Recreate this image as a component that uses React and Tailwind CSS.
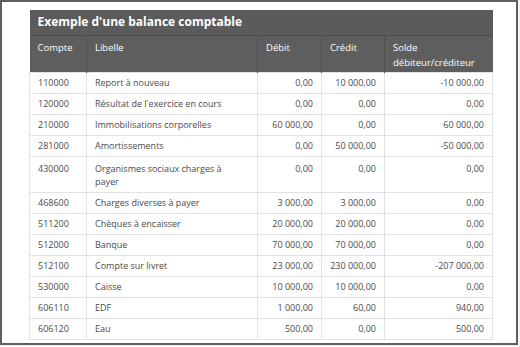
import React from 'react'

const rows = [
  ['110000', 'Report à nouveau', '0,00', '10 000,00', '-10 000,00'],
  ['120000', "Résultat de l'exercice en cours", '0,00', '0,00', '0,00'],
  ['210000', 'Immobilisations corporelles', '60 000,00', '0,00', '60 000,00'],
  ['281000', 'Amortissements', '0,00', '50 000,00', '-50 000,00'],
  ['430000', 'Organismes sociaux charges à payer', '0,00', '0,00', '0,00', true],
  ['468600', 'Charges diverses à payer', '3 000,00', '3 000,00', '0,00'],
  ['511200', 'Chèques à encaisser', '20 000,00', '20 000,00', '0,00'],
  ['512000', 'Banque', '70 000,00', '70 000,00', '0,00'],
  ['512100', 'Compte sur livret', '23 000,00', '230 000,00', '-207 000,00'],
  ['530000', 'Caisse', '10 000,00', '10 000,00', '0,00'],
  ['606110', 'EDF', '1 000,00', '60,00', '940,00'],
  ['606120', 'Eau', '500,00', '0,00', '500,00'],
]

export default function App() {
  return (
    <div className="w-[520px] h-[347px] bg-[#f4f4f4] overflow-hidden">
      <div
        className="w-[518px] h-[345px] bg-white border-2 border-[#5f5f5f] overflow-hidden pl-[27px] pt-[8px]"
        style={{ fontFamily: '"Open Sans", sans-serif' }}
      >
        <table className="w-[463px] border-collapse table-fixed text-[9px] text-[#4a4a4a]">
          <colgroup>
            <col className="w-[57px]" />
            <col className="w-[171px]" />
            <col className="w-[64px]" />
            <col className="w-[63px]" />
            <col className="w-[108px]" />
          </colgroup>
          <thead>
            <tr>
              <th
                colSpan={5}
                className="bg-[#5b5b5b] text-white text-left text-[12px] font-bold h-[25px] px-[8px] border-b border-[#4d4d4d]"
              >
                Exemple d'une balance comptable
              </th>
            </tr>
            <tr className="bg-[#5e5e5e] text-white text-[9.5px] font-normal leading-[15px]">
              <th className="h-[37px] px-[8px] pt-[4px] text-left align-top font-normal border-r border-[#4f4f4f]">Compte</th>
              <th className="px-[8px] pt-[4px] text-left align-top font-normal border-r border-[#4f4f4f]">Libelle</th>
              <th className="px-[8px] pt-[4px] text-left align-top font-normal border-r border-[#4f4f4f]">Débit</th>
              <th className="px-[8px] pt-[4px] text-left align-top font-normal border-r border-[#4f4f4f]">Crédit</th>
              <th className="px-[8px] pt-[4px] text-left align-top font-normal">
                Solde
                <br />
                débiteur/créditeur
              </th>
            </tr>
          </thead>
          <tbody>
            {rows.map((r) => (
              <tr key={r[0]} className="leading-[13px]">
                <td className={`${r[5] ? 'h-[36px] align-top pt-[5px]' : 'h-[21px]'} px-[8px] border border-[#e2e2e2]`}>{r[0]}</td>
                <td className={`${r[5] ? 'align-top pt-[5px]' : ''} px-[8px] border border-[#e2e2e2]`}>
                  {r[5] ? (
                    <>
                      Organismes sociaux charges à
                      <br />
                      payer
                    </>
                  ) : (
                    r[1]
                  )}
                </td>
                <td className={`${r[5] ? 'align-top pt-[5px]' : ''} px-[8px] text-right border border-[#e2e2e2]`}>{r[2]}</td>
                <td className={`${r[5] ? 'align-top pt-[5px]' : ''} px-[8px] text-right border border-[#e2e2e2]`}>{r[3]}</td>
                <td className={`${r[5] ? 'align-top pt-[5px]' : ''} px-[8px] text-right border border-[#e2e2e2]`}>{r[4]}</td>
              </tr>
            ))}
          </tbody>
        </table>
      </div>
    </div>
  )
}
